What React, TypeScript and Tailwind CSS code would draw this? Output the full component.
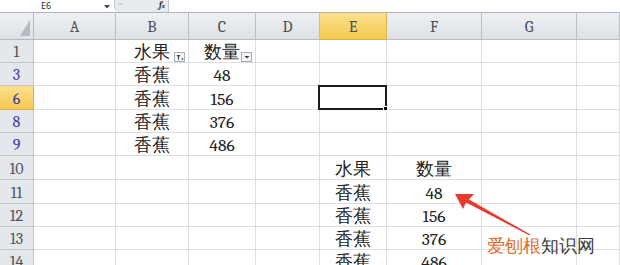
import React from 'react';

const cols = [
  { key: 'A', w: 'w-[82px]' },
  { key: 'B', w: 'w-[73px]' },
  { key: 'C', w: 'w-[67px]' },
  { key: 'D', w: 'w-[64px]' },
  { key: 'E', w: 'w-[67px]' },
  { key: 'F', w: 'w-[95px]' },
  { key: 'G', w: 'w-[95px]' },
  { key: '', w: 'flex-1' },
];

const rows = [
  { n: '1', h: 'h-[23px]', filtered: false },
  { n: '3', h: 'h-[23px]', filtered: true },
  { n: '6', h: 'h-[24px]', filtered: true },
  { n: '8', h: 'h-[23px]', filtered: true },
  { n: '9', h: 'h-[23px]', filtered: true },
  { n: '10', h: 'h-[24px]', filtered: false },
  { n: '11', h: 'h-[24px]', filtered: false },
  { n: '12', h: 'h-[23px]', filtered: false },
  { n: '13', h: 'h-[23px]', filtered: false },
  { n: '14', h: 'h-[23px]', filtered: false },
];

const cells: Record<string, string> = {
  '1B': '水果',
  '1C': '数量',
  '3B': '香蕉',
  '3C': '48',
  '6B': '香蕉',
  '6C': '156',
  '8B': '香蕉',
  '8C': '376',
  '9B': '香蕉',
  '9C': '486',
  '10E': '水果',
  '10F': '数量',
  '11E': '香蕉',
  '11F': '48',
  '12E': '香蕉',
  '12F': '156',
  '13E': '香蕉',
  '13F': '376',
  '14E': '香蕉',
  '14F': '486',
};

function FilterButton({ applied }: { applied: boolean }) {
  return (
    <div className="absolute right-[3px] top-[12px] w-[11px] h-[10px] border border-[#a9aeb5] bg-[#f4f5f7] flex items-center justify-center">
      {applied ? (
        <svg width="8" height="7" viewBox="0 0 8 7">
          <path d="M0.5 1 H4.5 L3 3 V6 L2 5.5 V3 Z" fill="#3a3f46" />
          <path d="M5 4.5 H8 L6.5 6 Z" fill="#3a3f46" />
        </svg>
      ) : (
        <svg width="6" height="4" viewBox="0 0 6 4">
          <path d="M0.5 1 H5.5 L3 3.5 Z" fill="#3a3f46" />
        </svg>
      )}
    </div>
  );
}

export default function App() {
  return (
    <div className="relative w-[620px] h-[265px] overflow-hidden bg-white font-serif">
      {/* formula bar strip */}
      <div className="h-[13px] flex items-stretch border-b border-[#aeb4bb] bg-white">
        <div className="w-[114px] flex items-start pl-[41px] pr-[4px]">
          <span className="text-[9px] leading-[12px] text-[#2a2a2a] font-sans">E6</span>
          <svg className="ml-auto mt-[5px]" width="6" height="4" viewBox="0 0 6 4">
            <path d="M0 0 H6 L3 3.5 Z" fill="#444" />
          </svg>
        </div>
        <div className="w-[54px] flex items-start justify-between px-[3px] bg-[#e7eaee] border-l border-[#c3c8ce] rounded-bl-[6px]">
          <span className="text-[8px] leading-[8px] text-[#b9bec5]">=</span>
          <span className="text-[9px] leading-[11px] italic font-bold text-[#333]">
            f<span className="text-[6px]">x</span>
          </span>
        </div>
        <div className="flex-1 border-l border-[#c3c8ce]" />
      </div>

      {/* column header row */}
      <div className="flex h-[27px]">
        <div className="w-[34px] flex items-end justify-end p-[3px] bg-gradient-to-b from-[#eef0f3] to-[#dde1e6] border-r border-b border-[#b3b9c0]">
          <svg width="10" height="16" viewBox="0 0 10 16">
            <path d="M10 0 V16 H0 Z" fill="#b6bbc2" />
          </svg>
        </div>
        {cols.map((c) => (
          <div
            key={c.key || 'H'}
            className={`${c.w} flex items-center justify-center pt-[2px] border-r border-b text-[16px] text-[#4a4f56] ${
              c.key === 'E'
                ? 'bg-gradient-to-b from-[#fbe08c] to-[#f5c94f] border-[#d9b24a]'
                : 'bg-gradient-to-b from-[#eef0f3] to-[#dde1e6] border-[#b9bec5]'
            }`}
          >
            {c.key}
          </div>
        ))}
      </div>

      {/* body rows */}
      {rows.map((r) => (
        <div key={r.n} className={`flex ${r.h}`}>
          <div
            className={`w-[34px] flex items-center justify-center pt-[2px] border-r border-b text-[16px] ${
              r.n === '6'
                ? 'bg-gradient-to-b from-[#fbe08c] to-[#f5c94f] border-[#d9b24a] text-[#3b3ba6]'
                : r.filtered
                ? 'bg-[#e4e7ec] border-[#c3c8ce] text-[#3b3bb0]'
                : 'bg-[#e4e7ec] border-[#c3c8ce] text-[#50555c]'
            }`}
          >
            {r.n}
          </div>
          {cols.map((c) => {
            const id = r.n + c.key;
            const v = cells[id];
            return (
              <div
                key={id}
                className={`${c.w} relative flex items-center justify-center pt-[3px] border-r border-b border-[#dcdee1] text-[17.5px] text-[#222]`}
              >
                {v}
                {id === '1B' && <FilterButton applied />}
                {id === '1C' && <FilterButton applied={false} />}
                {id === '6E' && (
                  <div className="absolute -left-[2px] -top-[1px] w-[69px] h-[25px] border-2 border-[#1b1b1b]">
                    <div className="absolute -right-[3px] -bottom-[3px] w-[5px] h-[5px] bg-black border border-white" />
                  </div>
                )}
              </div>
            );
          })}
        </div>
      ))}

      {/* annotation arrow */}
      <svg className="absolute left-0 top-0" width="620" height="265" viewBox="0 0 620 265">
        <path
          d="M455 194 L474 194 L469 199.5 L530.3 234.6 L529.7 235.6 L466 202.5 L463 209 Z"
          fill="#e63a2b"
        />
      </svg>

      {/* watermark */}
      <div className="absolute left-[487px] top-[235px] text-[18px] leading-[20px] font-sans">
        <span className="text-[#e0702b]">爱刨根</span>
        <span className="text-[#3d3d3d]">知识网</span>
      </div>
    </div>
  );
}
